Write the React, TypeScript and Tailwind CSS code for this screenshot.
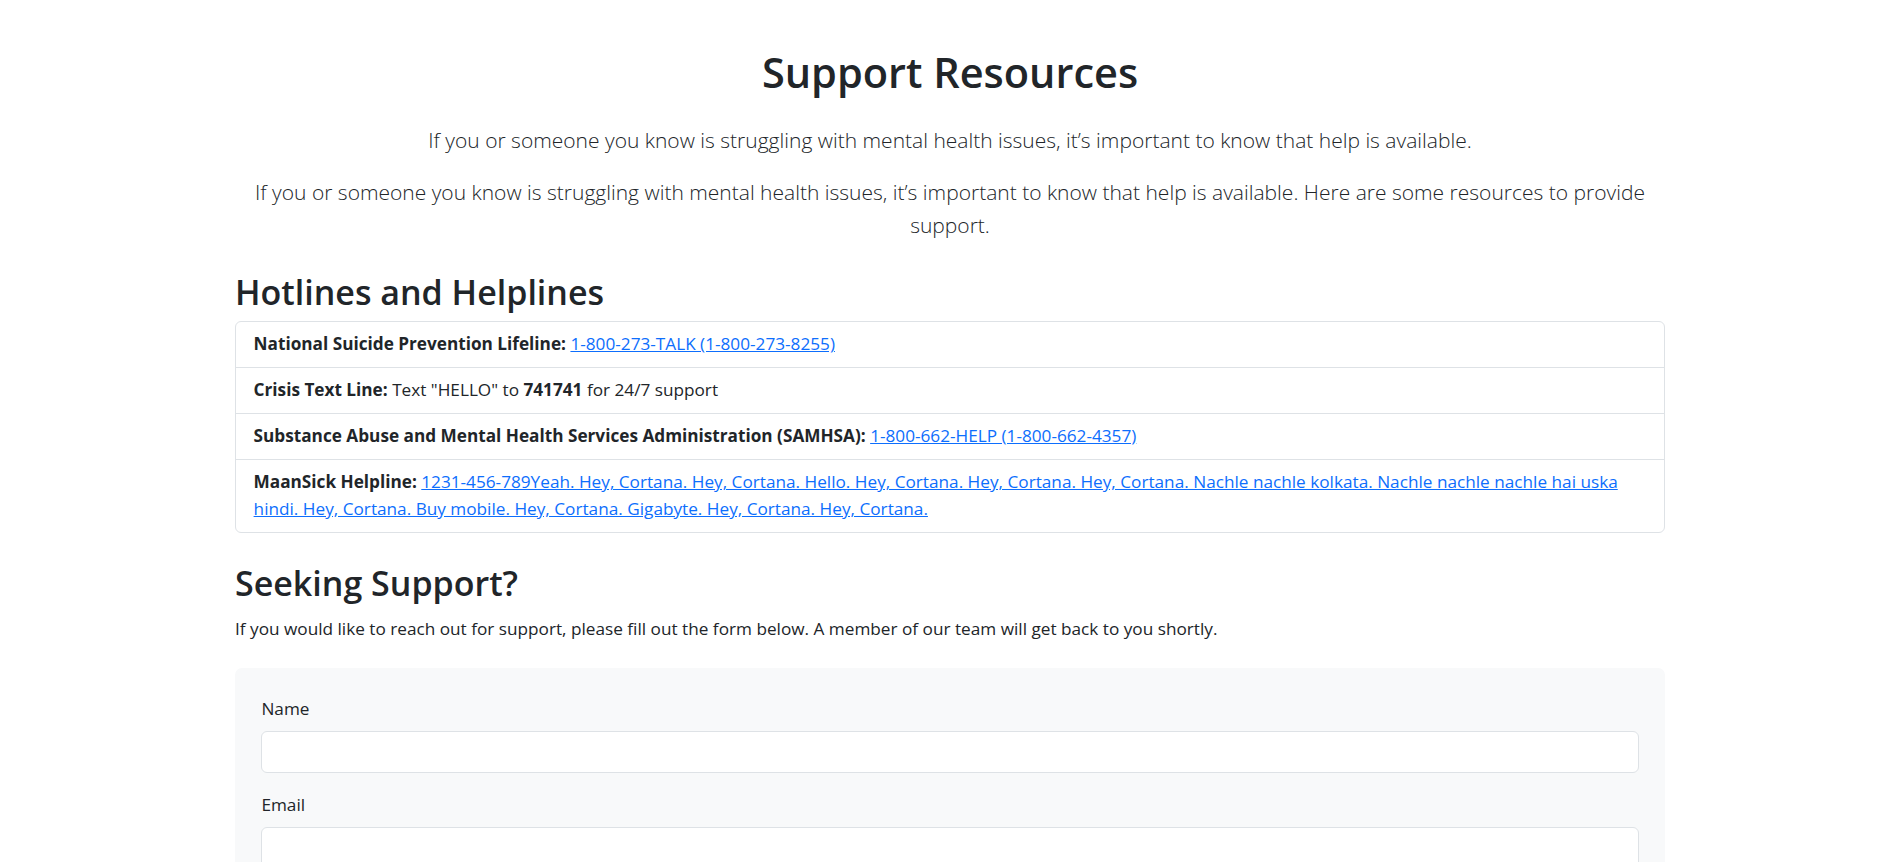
import React from "react";

export default function App() {
  const font = { fontFamily: '"Open Sans", "Noto Sans", sans-serif' };
  return (
    <div className="min-h-screen bg-white text-[#212529]" style={font}>
      <div className="pl-[235px] pr-[230px] pt-[48px] pb-[40px]">
        <h1 className="text-center text-[41.5px] font-semibold leading-[1.2] mb-[26px]">
          Support Resources
        </h1>
        <p className="text-center text-[21px] font-light leading-[33px] mb-[19px]">
          If you or someone you know is struggling with mental health issues, it’s important to know that help is available.
        </p>
        <p className="text-center text-[21px] font-light leading-[33px] mb-[30px]">
          If you or someone you know is struggling with mental health issues, it’s important to know that help is available. Here are some resources to provide support.
        </p>

        <h2 className="text-[34px] font-semibold leading-[1.2] mb-[8px]">Hotlines and Helplines</h2>
        <ul className="border border-[#dee2e6] rounded-[6px] text-[17.2px] leading-[26.4px]">
          <li className="px-[17.6px] py-[9.3px] border-b border-[#dee2e6]">
            <strong className="font-bold">National Suicide Prevention Lifeline:</strong>{" "}
            <a href="#" className="text-[#0d6efd] underline">1-800-273-TALK (1-800-273-8255)</a>
          </li>
          <li className="px-[17.6px] py-[9.3px] border-b border-[#dee2e6]">
            <strong className="font-bold">Crisis Text Line:</strong> Text "HELLO" to <strong className="font-bold">741741</strong> for 24/7 support
          </li>
          <li className="px-[17.6px] py-[9.3px] border-b border-[#dee2e6]">
            <strong className="font-bold">Substance Abuse and Mental Health Services Administration (SAMHSA):</strong>{" "}
            <a href="#" className="text-[#0d6efd] underline">1-800-662-HELP (1-800-662-4357)</a>
          </li>
          <li className="px-[17.6px] py-[9.8px]">
            <strong className="font-bold">MaanSick Helpline:</strong>{" "}
            <a href="#" className="text-[#0d6efd] underline">
              1231-456-789Yeah. Hey, Cortana. Hey, Cortana. Hello. Hey, Cortana. Hey, Cortana. Hey, Cortana. Nachle nachle kolkata. Nachle nachle nachle hai uska hindi. Hey, Cortana. Buy mobile. Hey, Cortana. Gigabyte. Hey, Cortana. Hey, Cortana.
            </a>
          </li>
        </ul>

        <h2 className="mt-[30px] text-[34px] font-semibold leading-[1.2] mb-[12px]">Seeking Support?</h2>
        <p className="text-[17.2px] leading-[26.4px] mb-[26px]">
          If you would like to reach out for support, please fill out the form below. A member of our team will get back to you shortly.
        </p>

        <form className="bg-[#f8f9fa] rounded-[7px] px-[26.4px] pt-[28px] pb-[26px]">
          <div className="mb-[18.5px]">
            <label className="block text-[17.2px] leading-[26.4px] mb-[8.8px]">Name</label>
            <input type="text" className="block w-full h-[42px] bg-white border border-[#dee2e6] rounded-[6px] px-[13px]" />
          </div>
          <div className="mb-[17.6px]">
            <label className="block text-[17.2px] leading-[26.4px] mb-[8.8px]">Email</label>
            <input type="email" className="block w-full h-[42px] bg-white border border-[#dee2e6] rounded-[6px] px-[13px]" />
          </div>
          <div className="mb-[17.6px]">
            <label className="block text-[17.2px] leading-[26.4px] mb-[8.8px]">Message</label>
            <textarea rows={4} className="block w-full bg-white border border-[#dee2e6] rounded-[6px] px-[13px]" />
          </div>
        </form>
      </div>
    </div>
  );
}
